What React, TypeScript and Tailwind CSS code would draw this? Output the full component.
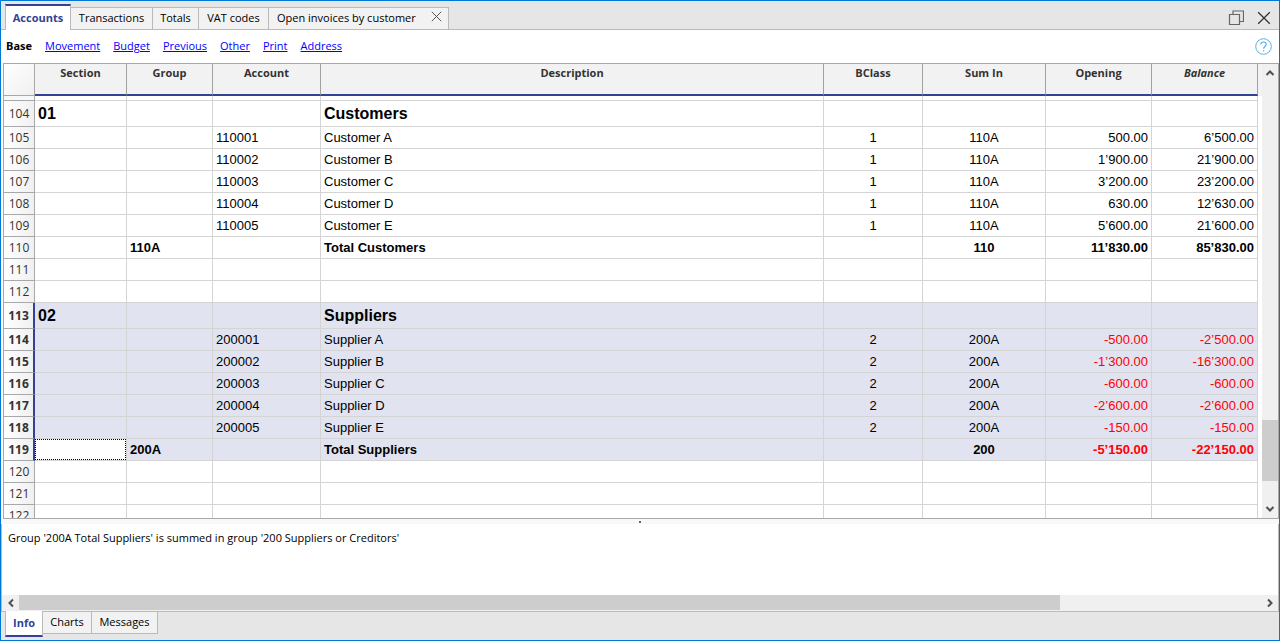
import type { ReactNode } from 'react';

type Kind = 'section' | 'account' | 'total' | 'blank';

interface Row {
  no: number;
  kind: Kind;
  section?: string;
  group?: string;
  account?: string;
  description?: string;
  bclass?: string;
  sumIn?: string;
  opening?: string;
  balance?: string;
}

const rows: Row[] = [
  { no: 104, kind: 'section', section: '01', description: 'Customers' },
  { no: 105, kind: 'account', account: '110001', description: 'Customer A', bclass: '1', sumIn: '110A', opening: '500.00', balance: '6’500.00' },
  { no: 106, kind: 'account', account: '110002', description: 'Customer B', bclass: '1', sumIn: '110A', opening: '1’900.00', balance: '21’900.00' },
  { no: 107, kind: 'account', account: '110003', description: 'Customer C', bclass: '1', sumIn: '110A', opening: '3’200.00', balance: '23’200.00' },
  { no: 108, kind: 'account', account: '110004', description: 'Customer D', bclass: '1', sumIn: '110A', opening: '630.00', balance: '12’630.00' },
  { no: 109, kind: 'account', account: '110005', description: 'Customer E', bclass: '1', sumIn: '110A', opening: '5’600.00', balance: '21’600.00' },
  { no: 110, kind: 'total', group: '110A', description: 'Total Customers', sumIn: '110', opening: '11’830.00', balance: '85’830.00' },
  { no: 111, kind: 'blank' },
  { no: 112, kind: 'blank' },
  { no: 113, kind: 'section', section: '02', description: 'Suppliers' },
  { no: 114, kind: 'account', account: '200001', description: 'Supplier A', bclass: '2', sumIn: '200A', opening: '-500.00', balance: '-2’500.00' },
  { no: 115, kind: 'account', account: '200002', description: 'Supplier B', bclass: '2', sumIn: '200A', opening: '-1’300.00', balance: '-16’300.00' },
  { no: 116, kind: 'account', account: '200003', description: 'Supplier C', bclass: '2', sumIn: '200A', opening: '-600.00', balance: '-600.00' },
  { no: 117, kind: 'account', account: '200004', description: 'Supplier D', bclass: '2', sumIn: '200A', opening: '-2’600.00', balance: '-2’600.00' },
  { no: 118, kind: 'account', account: '200005', description: 'Supplier E', bclass: '2', sumIn: '200A', opening: '-150.00', balance: '-150.00' },
  { no: 119, kind: 'total', group: '200A', description: 'Total Suppliers', sumIn: '200', opening: '-5’150.00', balance: '-22’150.00' },
  { no: 120, kind: 'blank' },
  { no: 121, kind: 'blank' },
  { no: 122, kind: 'blank' },
];

const columns = ['Section', 'Group', 'Account', 'Description', 'BClass', 'Sum In', 'Opening', 'Balance'];
const views = ['Movement', 'Budget', 'Previous', 'Other', 'Print', 'Address'];
const firstSelected = 113;
const lastSelected = 119;

function Cell({ children, className = 'px-[3px]' }: { children?: ReactNode; className?: string }) {
  return (
    <td className={`overflow-hidden border-r border-b border-[#d4d4d4] py-0 whitespace-nowrap ${className}`}>
      {children}
    </td>
  );
}

function amountColor(value?: string) {
  return value?.startsWith('-') ? 'text-[#ff0000]' : '';
}

function DataRow({ row }: { row: Row }) {
  const selected = row.no >= firstSelected && row.no <= lastSelected;
  const active = row.no === lastSelected;
  const height = row.kind === 'section' ? 'h-[26px] text-base leading-6' : 'h-[22px] text-[13px] leading-5';
  const weight = row.kind === 'section' || row.kind === 'total' ? 'font-bold' : '';
  return (
    <tr className={`${height} ${weight} ${selected ? 'bg-[#e1e3f1]' : 'bg-white'}`}>
      <th
        scope="row"
        className={`border-b border-b-[#a8a8a8] bg-linear-to-r from-white to-[#f0f0f0] p-0 text-center font-['Open_Sans',sans-serif] text-xs leading-5 text-[#333] ${
          selected ? 'border-r-2 border-r-[#334296] font-bold' : 'border-r border-r-[#a8a8a8] font-normal'
        }`}
      >
        {row.no}
      </th>
      {active ? (
        <Cell className="px-0">
          <div className="h-[21px] border border-dotted border-black bg-white" />
        </Cell>
      ) : (
        <Cell>{row.section}</Cell>
      )}
      <Cell>{row.group}</Cell>
      <Cell>{row.account}</Cell>
      <Cell>{row.description}</Cell>
      <Cell className="px-[3px] text-center">{row.bclass}</Cell>
      <Cell className="px-[3px] text-center">{row.sumIn}</Cell>
      <Cell className={`px-[3px] text-right ${amountColor(row.opening)}`}>{row.opening}</Cell>
      <Cell className={`px-[3px] text-right ${amountColor(row.balance)}`}>{row.balance}</Cell>
    </tr>
  );
}

function Chevron({ d }: { d: string }) {
  return (
    <svg viewBox="0 0 10 10" className="size-[10px]" fill="none" stroke="#505050" strokeWidth="2">
      <path d={d} />
    </svg>
  );
}

const topTab = 'h-[23px] border-t border-r border-b border-[#bababa] bg-[#f2f2f2] text-center whitespace-nowrap';

export default function App() {
  return (
    <div className="flex h-screen flex-col overflow-hidden border border-[#0078d7] bg-white font-['Open_Sans',sans-serif] text-[11px] text-black">
      <header className="flex h-[29px] shrink-0 items-end bg-[#e6e6e6]">
        <div className="w-1 self-stretch border-b border-[#bababa]" />
        <nav className="flex items-end">
          <button className="h-[26px] w-[66px] border-t-2 border-r border-l border-t-[#334296] border-r-[#bababa] border-l-[#bababa] bg-white text-center font-bold text-[#334296]">
            Accounts
          </button>
          <button className={`${topTab} w-[82px]`}>Transactions</button>
          <button className={`${topTab} w-[46px]`}>Totals</button>
          <button className={`${topTab} w-[70px]`}>VAT codes</button>
          <div className="flex h-[23px] w-[180px] items-center border-t border-r border-b border-[#bababa] bg-[#f2f2f2] pr-[6px] pl-2">
            <button className="whitespace-nowrap">Open invoices by customer</button>
            <button aria-label="Close tab" className="ml-auto pb-1">
              <svg viewBox="0 0 11 11" className="size-[11px]" stroke="#555" strokeWidth="1">
                <path d="M.8.8l9.4 9.4M10.2.8L.8 10.2" />
              </svg>
            </button>
          </div>
        </nav>
        <div className="flex flex-1 items-center justify-end gap-[13px] self-stretch border-b border-[#bababa] pt-[5px] pr-2">
          <button aria-label="Restore window">
            <svg viewBox="0 0 16 16" className="size-4" fill="none" stroke="#666" strokeWidth="1.2">
              <path d="M1.5 4.5h10v10h-10zM5 4.5V1h10.5v10.5h-4" />
            </svg>
          </button>
          <button aria-label="Close window">
            <svg viewBox="0 0 14 14" className="size-[14px]" stroke="#333" strokeWidth="1.3">
              <path d="M1.2 1.2l11.6 11.6M12.8 1.2L1.2 12.8" />
            </svg>
          </button>
        </div>
      </header>

      <nav className="flex h-[33px] shrink-0 items-center gap-[13px] pr-[7px] pl-[5px]">
        <span className="font-bold">Base</span>
        {views.map((view) => (
          <a key={view} href={`#${view.toLowerCase()}`} className="text-[#0000ff] underline">
            {view}
          </a>
        ))}
        <button aria-label="Help" className="ml-auto">
          <svg viewBox="0 0 17 17" className="size-[17px]" fill="none" stroke="#5aaee2">
            <circle cx="8.5" cy="8.5" r="7.8" />
            <path d="M5.8 6.6C5.8 3.2 11.2 3.2 11.2 6.3c0 2.2-2.6 2.2-2.6 4.5M8.6 12.2v1.4" strokeWidth="1.2" />
          </svg>
        </button>
      </nav>

      <main className="ml-[2px] flex min-h-0 flex-1 border border-[#a8a8a8]">
        <div className="min-w-0 flex-1 overflow-hidden">
          <table className="w-full table-fixed border-separate border-spacing-0 font-['Liberation_Sans',Arial,sans-serif]">
            <colgroup>
              <col className="w-[31px]" />
              <col className="w-[92px]" />
              <col className="w-[86px]" />
              <col className="w-[108px]" />
              <col />
              <col className="w-[99px]" />
              <col className="w-[123px]" />
              <col className="w-[106px]" />
              <col className="w-[106px]" />
            </colgroup>
            <thead className="font-['Open_Sans',sans-serif] text-[11px]">
              <tr className="h-8 bg-[#f2f2f2] text-[#333]">
                <td className="border-r border-b border-[#a8a8a8] bg-linear-to-br from-white to-[#f0f0f0] p-0" />
                {columns.map((name) => (
                  <th
                    key={name}
                    scope="col"
                    className={`border-r border-b-2 border-r-[#a0a0a0] border-b-[#334296] p-0 text-center align-top leading-[18px] font-bold ${
                      name === 'Balance' ? 'italic' : ''
                    }`}
                  >
                    {name}
                  </th>
                ))}
              </tr>
            </thead>
            <tbody>
              <tr className="h-[5px]">
                <td className="border-r border-b border-[#a8a8a8] bg-[#f8f8f8] p-0" />
                {columns.map((name) => (
                  <Cell key={name} />
                ))}
              </tr>
              {rows.map((row) => (
                <DataRow key={row.no} row={row} />
              ))}
            </tbody>
          </table>
        </div>
        <div className="w-1 shrink-0">
          <div className="h-8 bg-[#f2f2f2]" />
        </div>
        <div className="flex w-4 shrink-0 flex-col items-center bg-[#f0f0f0]">
          <button aria-label="Scroll up" className="flex h-[18px] w-full items-center justify-center">
            <Chevron d="M1.5 7L5 3.5L8.5 7" />
          </button>
          <div className="flex-[338_1_0%]" />
          <div className="w-full flex-[61_1_0%] bg-[#cdcdcd]" />
          <div className="flex-[19_1_0%]" />
          <button aria-label="Scroll down" className="flex h-[18px] w-full items-center justify-center">
            <Chevron d="M1.5 3L5 6.5L8.5 3" />
          </button>
        </div>
      </main>

      <div className="flex h-[5px] shrink-0 items-center justify-center bg-[#f8f8f8]">
        <div className="h-[2px] w-[2px] bg-[#666]" />
      </div>

      <section className="flex h-[88px] shrink-0 flex-col border-r border-b border-l border-[#bababa]">
        <p className="flex-1 px-[6px] pt-[5px] leading-[18px]">
          Group '200A Total Suppliers' is summed in group '200 Suppliers or Creditors'
        </p>
        <div className="flex h-[15px] shrink-0 bg-[#f0f0f0]">
          <button aria-label="Scroll left" className="flex w-[17px] items-center justify-center">
            <Chevron d="M7 1.5L3.5 5L7 8.5" />
          </button>
          <div className="flex-[1041_1_0%] bg-[#cdcdcd]" />
          <div className="flex-[201_1_0%]" />
          <button aria-label="Scroll right" className="flex w-[17px] items-center justify-center">
            <Chevron d="M3 1.5L6.5 5L3 8.5" />
          </button>
        </div>
        <div className="h-px shrink-0 bg-[#f0f0f0]" />
      </section>

      <footer className="flex h-7 shrink-0 items-start bg-[#e6e6e6] pl-1">
        <button className="-mt-px h-[26px] w-[38px] border-r border-b-2 border-l border-r-[#bababa] border-b-[#334296] border-l-[#bababa] bg-white text-center font-bold text-[#334296]">
          Info
        </button>
        <button className="h-[22px] w-[49px] border-r border-b border-[#bababa] bg-[#f2f2f2] text-center">Charts</button>
        <button className="h-[22px] w-[66px] border-r border-b border-[#bababa] bg-[#f2f2f2] text-center">Messages</button>
      </footer>
    </div>
  );
}
